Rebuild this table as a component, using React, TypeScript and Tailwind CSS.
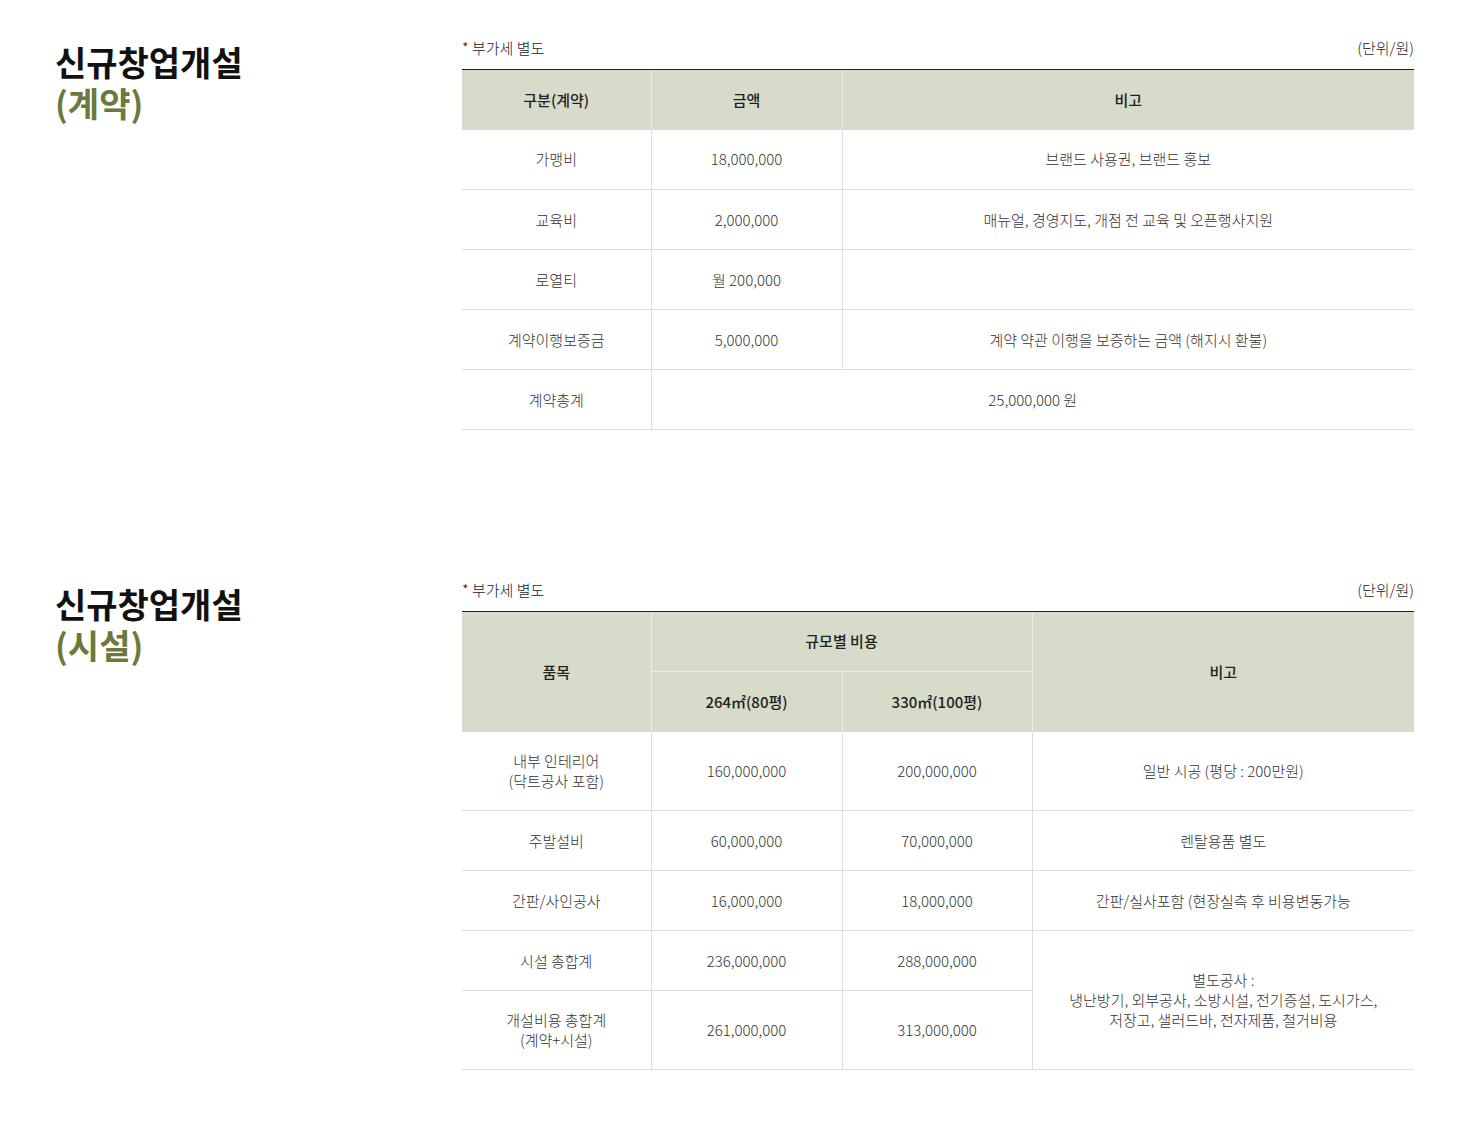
import React from 'react';

const font = { fontFamily: '"Noto Sans CJK KR", "Noto Sans", sans-serif' };

const th = 'bg-[#d7dbc9] text-[15px] font-medium text-[#222] text-center border-l border-[#eceee5] first:border-l-0 border-t border-t-[#222]';
const td = 'text-[15px] font-light text-[#333] text-center border-l border-b border-[#dddddd] first:border-l-0 leading-[20px]';

function Title({ sub }: { sub: string }) {
  return (
    <div className="w-[407px] shrink-0 pt-[3px]">
      <h2 className="text-[34px] font-bold leading-[41px] text-[#111]">신규창업개설</h2>
      <p className="text-[34px] font-bold leading-[41px] text-[#6a7a3c]">({sub})</p>
    </div>
  );
}

function Note() {
  return (
    <div className="flex justify-between text-[15px] font-light text-[#222] leading-[20px] pb-[11px]">
      <span>* 부가세 별도</span>
      <span>(단위/원)</span>
    </div>
  );
}

const contract = [
  ['가맹비', '18,000,000', '브랜드 사용권, 브랜드 홍보'],
  ['교육비', '2,000,000', '매뉴얼, 경영지도, 개점 전 교육 및 오픈행사지원'],
  ['로열티', '월 200,000', ''],
  ['계약이행보증금', '5,000,000', '계약 약관 이행을 보증하는 금액 (해지시 환불)'],
];

export default function App() {
  return (
    <div className="min-h-screen bg-white" style={font}>
      <div className="pl-[55px] pr-[60px] pt-[38px] pb-[80px]">
        <section className="flex">
          <Title sub="계약" />
          <div className="w-[952px]">
            <Note />
            <table className="w-full border-collapse table-fixed">
              <colgroup>
                <col className="w-[189px]" />
                <col className="w-[191px]" />
                <col />
              </colgroup>
              <thead>
                <tr className="h-[60px]">
                  <th className={th}>구분(계약)</th>
                  <th className={th}>금액</th>
                  <th className={th}>비고</th>
                </tr>
              </thead>
              <tbody>
                {contract.map((r) => (
                  <tr key={r[0]} className="h-[60px]">
                    <td className={td}>{r[0]}</td>
                    <td className={td}>{r[1]}</td>
                    <td className={td}>{r[2]}</td>
                  </tr>
                ))}
                <tr className="h-[60px]">
                  <td className={td}>계약총계</td>
                  <td className={td} colSpan={2}>25,000,000 원</td>
                </tr>
              </tbody>
            </table>
          </div>
        </section>

        <section className="flex mt-[150px]">
          <Title sub="시설" />
          <div className="w-[952px]">
            <Note />
            <table className="w-full border-collapse table-fixed">
              <colgroup>
                <col className="w-[189px]" />
                <col className="w-[191px]" />
                <col className="w-[190px]" />
                <col />
              </colgroup>
              <thead>
                <tr className="h-[60px]">
                  <th className={th} rowSpan={2}>품목</th>
                  <th className={th + ' border-b border-b-[#eceee5]'} colSpan={2}>규모별 비용</th>
                  <th className={th} rowSpan={2}>비고</th>
                </tr>
                <tr className="h-[60px]">
                  <th className="bg-[#d7dbc9] text-[15px] font-medium text-[#222] text-center border-l border-[#eceee5]">264㎡(80평)</th>
                  <th className="bg-[#d7dbc9] text-[15px] font-medium text-[#222] text-center border-l border-[#eceee5]">330㎡(100평)</th>
                </tr>
              </thead>
              <tbody>
                <tr className="h-[79px]">
                  <td className={td}>내부 인테리어<br />(닥트공사 포함)</td>
                  <td className={td}>160,000,000</td>
                  <td className={td}>200,000,000</td>
                  <td className={td}>일반 시공 (평당 : 200만원)</td>
                </tr>
                <tr className="h-[60px]">
                  <td className={td}>주발설비</td>
                  <td className={td}>60,000,000</td>
                  <td className={td}>70,000,000</td>
                  <td className={td}>렌탈용품 별도</td>
                </tr>
                <tr className="h-[60px]">
                  <td className={td}>간판/사인공사</td>
                  <td className={td}>16,000,000</td>
                  <td className={td}>18,000,000</td>
                  <td className={td}>간판/실사포함 (현장실측 후 비용변동가능</td>
                </tr>
                <tr className="h-[60px]">
                  <td className={td}>시설 총합계</td>
                  <td className={td}>236,000,000</td>
                  <td className={td}>288,000,000</td>
                  <td className={td} rowSpan={2}>
                    별도공사 :<br />냉난방기, 외부공사, 소방시설, 전기증설, 도시가스,<br />저장고, 샐러드바, 전자제품, 철거비용
                  </td>
                </tr>
                <tr className="h-[79px]">
                  <td className={td}>개설비용 총합계<br />(계약+시설)</td>
                  <td className={td}>261,000,000</td>
                  <td className={td}>313,000,000</td>
                </tr>
              </tbody>
            </table>
          </div>
        </section>
      </div>
    </div>
  );
}
